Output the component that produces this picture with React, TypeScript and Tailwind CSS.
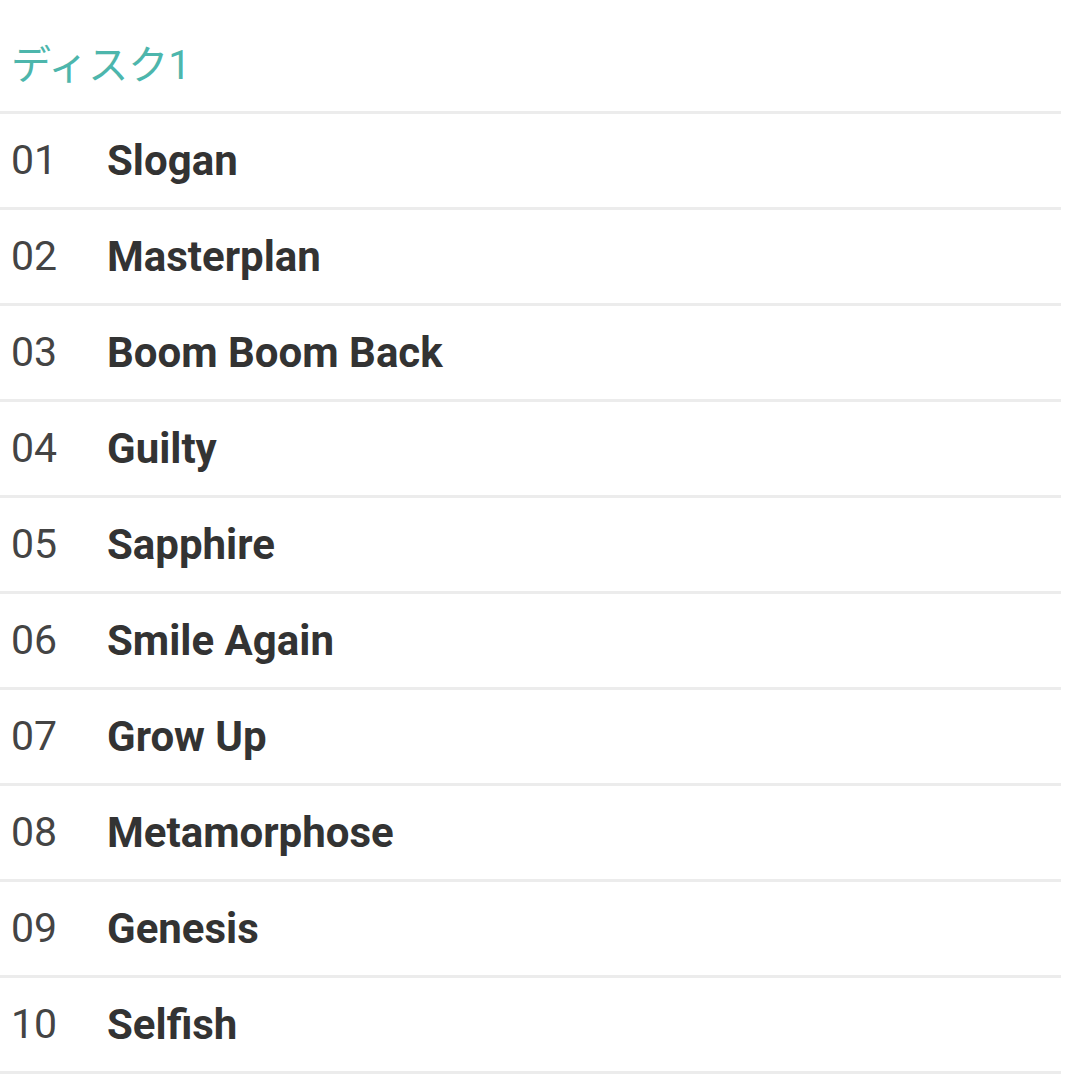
import React from "react";

const tracks = [
  "Slogan",
  "Masterplan",
  "Boom Boom Back",
  "Guilty",
  "Sapphire",
  "Smile Again",
  "Grow Up",
  "Metamorphose",
  "Genesis",
  "Selfish",
];

export default function App() {
  return (
    <div
      className="w-[1080px] h-[1080px] bg-white overflow-hidden"
      style={{ fontFamily: 'Roboto, "Noto Sans CJK JP", sans-serif' }}
    >
      <div className="w-[1061px]">
        <div className="h-[111px] flex items-center pl-[11px] pt-[20px] text-[40px] text-[#4db6ac]">
          ディスク1
        </div>
        {tracks.map((t, i) => (
          <div
            key={t}
            className="h-[96px] border-t-[3px] border-[#ececec] flex items-center"
          >
            <span className="w-[107px] pl-[11px] text-[41px] text-[#444]">
              {String(i + 1).padStart(2, "0")}
            </span>
            <span className="text-[42px] font-bold text-[#333]">{t}</span>
          </div>
        ))}
        <div className="border-t-[3px] border-[#ececec]" />
      </div>
    </div>
  );
}
